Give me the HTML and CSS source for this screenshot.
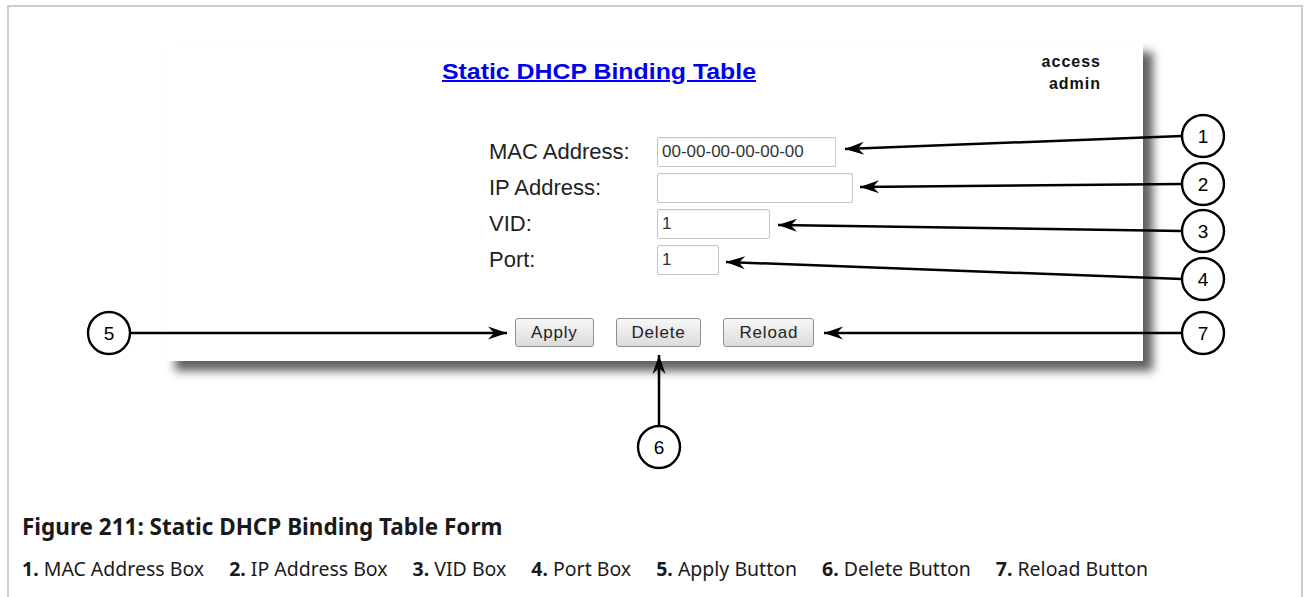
FILE: index.html
```
<!DOCTYPE HTML>
<html lang="en">
<head>
	<meta charset="utf-8">
	<title>Static DHCP Binding Table Form</title>
	<link rel="stylesheet" href="styles.css">
</head>
<body>
	<div class="figure">
		<div class="panel">
			<div class="panel-head">
				<a class="panel-title" href="#">Static DHCP Binding Table</a>
				<div class="user">
					<span>access</span>
					<span>admin</span>
				</div>
			</div>
			<div class="fields">
				<label for="mac">MAC Address:</label>
				<input class="field field-mac" id="mac" value="00-00-00-00-00-00">
				<label for="ip">IP Address:</label>
				<input class="field field-ip" id="ip" value="">
				<label for="vid">VID:</label>
				<input class="field field-vid" id="vid" value="1">
				<label for="port">Port:</label>
				<input class="field field-port" id="port" value="1">
			</div>
			<div class="actions">
				<button class="btn">Apply</button>
				<button class="btn">Delete</button>
				<button class="btn">Reload</button>
			</div>
		</div>
		<p class="caption">Figure 211: Static DHCP Binding Table Form</p>
		<ul class="legend">
			<li><b>1.</b> MAC Address Box</li>
			<li><b>2.</b> IP Address Box</li>
			<li><b>3.</b> VID Box</li>
			<li><b>4.</b> Port Box</li>
			<li><b>5.</b> Apply Button</li>
			<li><b>6.</b> Delete Button</li>
			<li><b>7.</b> Reload Button</li>
		</ul>
	</div>

	<!-- Callouts drawn over the screenshot -->
	<svg class="callouts" width="1307" height="480" viewBox="0 0 1307 480">
		<defs>
			<marker id="head" viewBox="-20 -8 22 16" markerWidth="22" markerHeight="16" refX="0" refY="0" orient="auto" markerUnits="userSpaceOnUse">
				<path d="M0,0 L-19,-6.5 L-13,0 L-19,6.5 Z" fill="#000"/>
			</marker>
		</defs>
		<g class="arrows">
			<line x1="1182" y1="136" x2="845" y2="149"/>
			<line x1="1182" y1="184" x2="860" y2="187"/>
			<line x1="1182" y1="231" x2="778" y2="225"/>
			<line x1="1182" y1="279" x2="726" y2="262"/>
			<line x1="1182" y1="333" x2="824" y2="333"/>
			<line x1="131" y1="333" x2="507" y2="333"/>
			<line x1="659" y1="426" x2="659" y2="355"/>
		</g>
		<g class="marks">
			<circle cx="1203" cy="136" r="21"/><text x="1203" y="143">1</text>
			<circle cx="1203" cy="184" r="21"/><text x="1203" y="191">2</text>
			<circle cx="1203" cy="231" r="21"/><text x="1203" y="238">3</text>
			<circle cx="1203" cy="279" r="21"/><text x="1203" y="286">4</text>
			<circle cx="109" cy="333" r="21"/><text x="109" y="340">5</text>
			<circle cx="659" cy="447" r="21"/><text x="659" y="454">6</text>
			<circle cx="1203" cy="333" r="21"/><text x="1203" y="340">7</text>
		</g>
	</svg>
</body>
</html>
```

FILE: styles.css
```
body {
	position:relative;
	margin:0;
	background:#fff;
	color:#222;
	overflow:hidden;
	}

/* Figure frame */
.figure {
	height:600px;
	margin:5px 4px 0 7px;
	border:2px solid #cdcdcd;
	border-bottom:none;
	}

/* Screenshot panel */
.panel {
	box-sizing:border-box;
	width:978px;
	height:319px;
	margin:35px 0 0 156px;
	background:#fff;
	box-shadow:10px 10px 9px rgba(0,0,0,.62);
	font-family:"Liberation Sans", Arial, sans-serif;
	}
	.panel-head {
		display:flex;
		justify-content:space-between;
		align-items:flex-start;
		padding:9px 42px 0 277px;
		}
	.panel-title {
		display:inline-block;
		margin-top:6px;
		font-size:22px;
		line-height:30px;
		font-weight:bold;
		color:#0000ee;
		text-decoration-thickness:2px;
		transform:scaleX(1.13);
		transform-origin:left center;
		}
	.user {
		display:flex;
		flex-direction:column;
		align-items:flex-end;
		font-size:16px;
		line-height:22px;
		font-weight:bold;
		letter-spacing:1px;
		color:#111;
		}

/* Form rows */
.fields {
	display:grid;
	grid-template-columns:168px max-content;
	row-gap:6px;
	align-items:center;
	justify-items:start;
	margin-top:42px;
	padding-left:324px;
	}
	.fields label {
		font-size:22px;
		line-height:30px;
		color:#222;
		}
.field {
	box-sizing:border-box;
	height:30px;
	margin:0;
	padding:0 4px;
	border:1px solid #c6c6c6;
	border-radius:2px;
	box-shadow:inset 0 1px 1px rgba(0,0,0,.06);
	background:#fff;
	font-family:"Liberation Sans", Arial, sans-serif;
	font-size:17px;
	color:#333;
	}
.field-mac { width:179px; }
.field-ip { width:196px; }
.field-vid { width:113px; }
.field-port { width:62px; }

/* Buttons */
.actions {
	display:flex;
	gap:22px;
	margin-top:43px;
	padding-left:350px;
	}
.btn {
	height:29px;
	padding:0 15px;
	border:1px solid #8f8f8f;
	border-radius:3px;
	background:linear-gradient(#f7f7f7, #dcdcdc);
	font-family:"Liberation Sans", Arial, sans-serif;
	font-size:17px;
	letter-spacing:.8px;
	color:#222;
	}

/* Caption */
.caption {
	margin:152px 0 0 13px;
	font-family:"Noto Sans", sans-serif;
	font-size:22.5px;
	line-height:28px;
	font-weight:bold;
	color:#1a1a1a;
	}
.legend {
	display:flex;
	gap:25px;
	margin:15px 0 0 13px;
	padding:0;
	list-style:none;
	font-family:"Noto Sans", sans-serif;
	font-size:19.5px;
	line-height:26px;
	color:#1a1a1a;
	}

/* Callouts */
.callouts {
	position:absolute;
	top:0;
	left:0;
	pointer-events:none;
	}
	.arrows line {
		stroke:#000;
		stroke-width:2.5;
		marker-end:url(#head);
		}
	.marks circle {
		fill:#fff;
		stroke:#000;
		stroke-width:2.4;
		}
	.marks text {
		font-family:"Liberation Sans", Arial, sans-serif;
		font-size:19px;
		text-anchor:middle;
		fill:#000;
		}
```
